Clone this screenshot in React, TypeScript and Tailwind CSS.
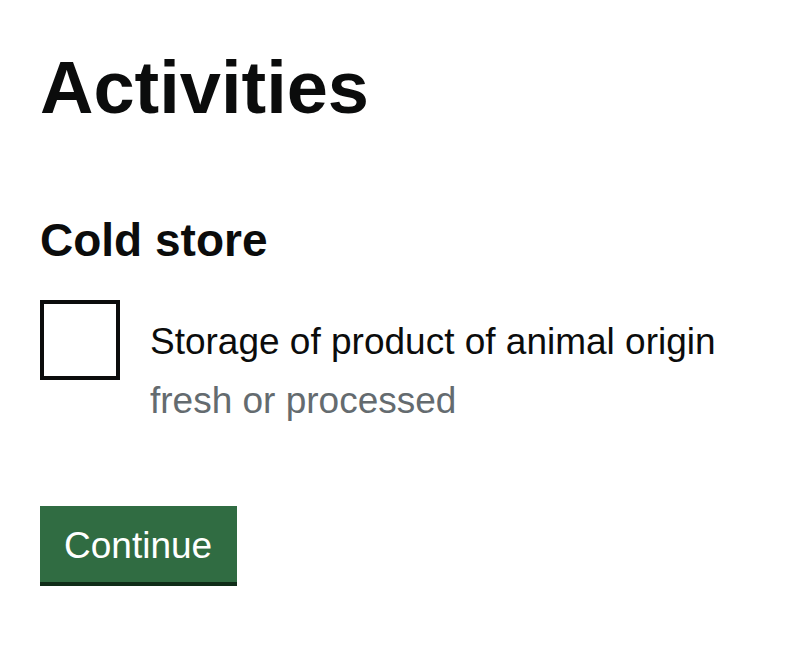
export default function App() {
  return (
    <div className="min-h-screen bg-white pl-10 text-[#0b0c0c]" style={{ fontFamily: '"Liberation Sans", Arial, sans-serif' }}>
      <h1 className="pt-[48px] text-[74px] font-bold leading-[80px]">Activities</h1>

      <h2 className="mt-[87px] text-[46px] font-bold leading-[50px]">Cold store</h2>

      <div className="mt-[35px] flex items-start">
        <div className="h-20 w-20 shrink-0 border-4 border-[#0b0c0c] bg-white" />
        <div className="ml-[30px] pt-[20px]">
          <div className="text-[37px] leading-[44px]">Storage of product of animal origin</div>
          <div className="mt-[15px] text-[37px] leading-[44px] text-[#646b6f]">fresh or processed</div>
        </div>
      </div>

      <button className="mt-[83px] h-[76px] bg-[#306c42] pb-[14px] pl-[24px] pr-[25px] pt-[18px] text-[37px] leading-[44px] text-white shadow-[0_4px_0_#0f2c18]">
        Continue
      </button>
    </div>
  )
}
